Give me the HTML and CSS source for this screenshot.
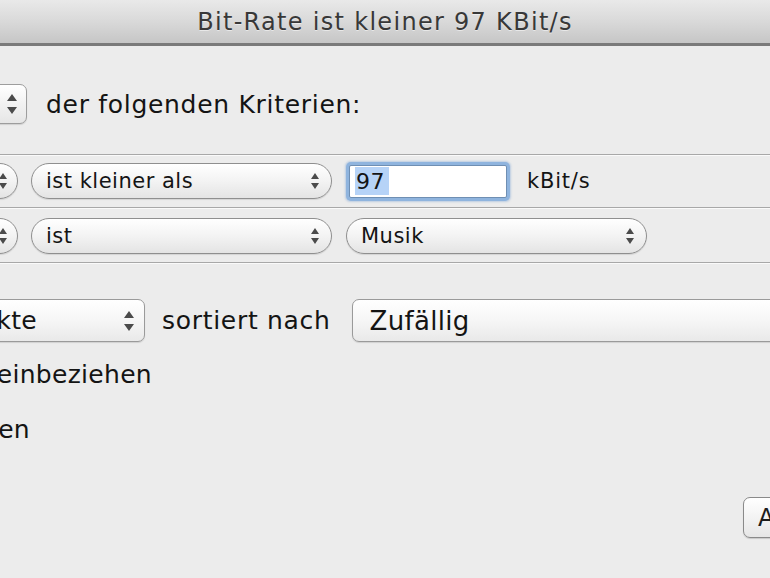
FILE: index.html
```html
<!DOCTYPE html>
<html lang="de">
<head>
<meta charset="utf-8">
<title>Intelligente Wiedergabeliste</title>
<link rel="stylesheet" href="styles.css">
</head>
<body>
<div class="window">
  <div class="titlebar">Bit-Rate ist kleiner 97 KBit/s</div>

  <div class="match-row">
    <div class="stepper-box">
      <svg class="arrows big" viewBox="0 0 10 20"><path d="M5 0 L10 7 H0Z M0 13 H10 L5 20Z"/></svg>
    </div>
    <span class="label">der folgenden Kriterien:</span>
  </div>

  <div class="criteria">
    <div class="crit-row">
      <div class="pill pill-stub">
        <svg class="arrows" viewBox="0 0 8 16"><path d="M4 0 L8 6 H0Z M0 10 H8 L4 16Z"/></svg>
      </div>
      <div class="pill pill-wide">
        <span class="pill-text">ist kleiner als</span>
        <svg class="arrows" viewBox="0 0 8 16"><path d="M4 0 L8 6 H0Z M0 10 H8 L4 16Z"/></svg>
      </div>
      <div class="field"><span class="sel">97</span></div>
      <span class="small-label">kBit/s</span>
    </div>
    <div class="crit-row">
      <div class="pill pill-stub">
        <svg class="arrows" viewBox="0 0 8 16"><path d="M4 0 L8 6 H0Z M0 10 H8 L4 16Z"/></svg>
      </div>
      <div class="pill pill-wide">
        <span class="pill-text">ist</span>
        <svg class="arrows" viewBox="0 0 8 16"><path d="M4 0 L8 6 H0Z M0 10 H8 L4 16Z"/></svg>
      </div>
      <div class="pill pill-wide pill-musik">
        <span class="pill-text">Musik</span>
        <svg class="arrows" viewBox="0 0 8 16"><path d="M4 0 L8 6 H0Z M0 10 H8 L4 16Z"/></svg>
      </div>
    </div>
  </div>

  <div class="limit-row">
    <div class="popup popup-unit">
      <span class="clip-text"><span>Objekte</span></span>
      <svg class="arrows big" viewBox="0 0 10 20"><path d="M5 0 L10 7 H0Z M0 13 H10 L5 20Z"/></svg>
    </div>
    <span class="label">sortiert nach</span>
    <div class="popup popup-sort">
      <span class="popup-text">Zufällig</span>
    </div>
  </div>

  <div class="check-row"><span>Nur markierte Objekte einbeziehen</span></div>
  <div class="check-row check-short"><span>Automatisch aktualisieren</span></div>

  <div class="footer">
    <button class="btn">Abbrechen</button>
  </div>
</div>
</body>
</html>
```

FILE: styles.css
```css
html, body {
  margin: 0;
  padding: 0;
}
body {
  width: 770px;
  height: 578px;
  overflow: hidden;
  background: #ececec;
  font-family: "DejaVu Sans", "Liberation Sans", sans-serif;
  color: #141414;
}
.window {
  width: 770px;
}
.titlebar {
  height: 43px;
  line-height: 45px;
  text-align: center;
  font-size: 24px;
  letter-spacing: 1.3px;
  color: #383838;
  background: linear-gradient(#e9e9e9, #d9d9d9 50%, #c6c6c6);
  border-bottom: 3px solid #7a7a7a;
  text-shadow: 0 1px 0 rgba(255,255,255,0.5);
}
.label {
  font-size: 25px;
  letter-spacing: 0.7px;
  white-space: nowrap;
  flex: none;
}
.match-row {
  display: flex;
  align-items: center;
  gap: 19px;
  margin-top: 38px;
  height: 40px;
}
.stepper-box {
  width: 40px;
  height: 40px;
  flex: none;
  margin-left: -13px;
  box-sizing: border-box;
  border: 1px solid #9d9d9d;
  border-radius: 7px;
  background: linear-gradient(#ffffff, #f2f2f2 50%, #e6e6e6);
  box-shadow: 0 1px 1px rgba(0,0,0,0.12);
  display: flex;
  align-items: center;
  justify-content: flex-end;
  padding-right: 9px;
}
.arrows {
  width: 8px;
  height: 16px;
  fill: #4b4b4b;
  flex: none;
}
.arrows.big {
  width: 10px;
  height: 20px;
}
.criteria {
  margin-top: 30px;
  border-top: 1px solid #a8a8a8;
  box-shadow: inset 0 1px 0 #fafafa;
}
.crit-row {
  display: flex;
  align-items: center;
  height: 52px;
  border-bottom: 1px solid #a8a8a8;
  box-shadow: 0 1px 0 #fafafa;
  margin-bottom: 1px;
}
.crit-row + .crit-row {
  height: 53px;
}
.pill {
  height: 36px;
  flex: none;
  box-sizing: border-box;
  border: 1px solid #8f8f8f;
  border-radius: 18px;
  background: linear-gradient(#ffffff, #f3f3f3 50%, #e4e4e4);
  box-shadow: 0 1px 1px rgba(0,0,0,0.1);
  display: flex;
  align-items: center;
  padding: 0 12px 0 14px;
  font-size: 21px;
  letter-spacing: 0.5px;
  white-space: nowrap;
}
.pill-stub {
  width: 36px;
  margin-left: -18px;
  justify-content: flex-end;
  padding-right: 10px;
}
.pill-wide {
  width: 301px;
  margin-left: 13px;
}
.pill-musik {
  margin-left: 14px;
}
.pill-text {
  flex: 1;
}
.field {
  width: 158px;
  height: 33px;
  flex: none;
  margin-left: 17px;
  box-sizing: border-box;
  background: #ffffff;
  border: 1px solid #6f8fb3;
  box-shadow: 0 0 0 3px #8fb4de, 0 0 2px 4px rgba(120,160,210,0.4);
  border-radius: 2px;
  display: flex;
  align-items: center;
  padding-left: 5px;
  font-size: 22px;
  letter-spacing: 0.4px;
}
.sel {
  background: #b6d3f7;
  padding: 2px 4px 1px 1px;
}
.small-label {
  margin-left: 20px;
  font-size: 21px;
  letter-spacing: 0.8px;
}
.limit-row {
  display: flex;
  align-items: center;
  margin-top: 36px;
  height: 43px;
}
.popup {
  height: 43px;
  flex: none;
  box-sizing: border-box;
  border: 1px solid #9a9a9a;
  border-radius: 7px;
  background: linear-gradient(#ffffff, #f6f6f6 50%, #e9e9e9);
  box-shadow: 0 1px 1px rgba(0,0,0,0.12);
  display: flex;
  align-items: center;
  font-size: 25px;
  letter-spacing: 0.3px;
  white-space: nowrap;
}
.popup-unit {
  width: 205px;
  margin-left: -60px;
  padding: 0 10px 0 0;
  margin-right: 17px;
}
.clip-text {
  width: 96px;
  display: flex;
  justify-content: flex-end;
  margin-right: auto;
}
.popup-sort {
  width: 520px;
  margin-left: 21px;
  padding-left: 17px;
  font-size: 26px;
}
.check-row {
  display: flex;
  justify-content: flex-end;
  width: 152px;
  font-size: 25px;
  letter-spacing: 0.3px;
  white-space: nowrap;
  height: 30px;
  line-height: 30px;
  margin-top: 18px;
}
.check-short {
  width: 30px;
  margin-top: 25px;
}
.footer {
  display: flex;
  margin-top: 52px;
}
.btn {
  margin-left: 743px;
  height: 41px;
  width: 160px;
  flex: none;
  border: 1px solid #8a8a8a;
  border-radius: 7px;
  background: linear-gradient(#ffffff, #f3f3f3 50%, #e6e6e6);
  box-shadow: 0 1px 1px rgba(0,0,0,0.15);
  font-family: "DejaVu Sans", sans-serif;
  font-size: 24px;
  text-align: left;
  padding: 0 0 0 14px;
  color: #1c1c1c;
}
```
